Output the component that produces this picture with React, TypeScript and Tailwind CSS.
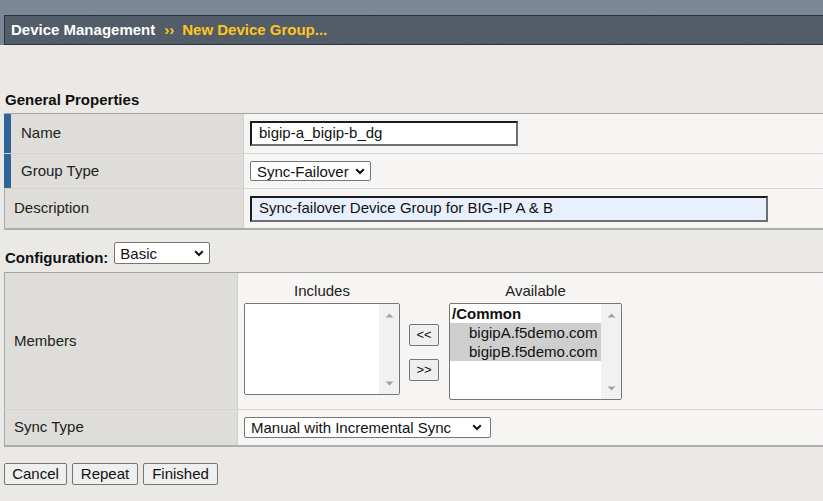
import React from "react";

const Chevron = () => (
  <svg width="10" height="7" viewBox="0 0 10 7" className="shrink-0">
    <path d="M1.2 1.2 L5 5 L8.8 1.2" fill="none" stroke="#111" strokeWidth="2" />
  </svg>
);

const UpArrow = () => (
  <svg width="9" height="5" viewBox="0 0 9 5">
    <path d="M0.5 4.5 L4.5 0.5 L8.5 4.5Z" fill="#a3a3a3" />
  </svg>
);
const DownArrow = () => (
  <svg width="9" height="5" viewBox="0 0 9 5">
    <path d="M0.5 0.5 L4.5 4.5 L8.5 0.5Z" fill="#a3a3a3" />
  </svg>
);

function Select({ text, cls }: { text: string; cls: string }) {
  return (
    <div
      className={
        "flex items-center justify-between bg-white border border-[#767676] rounded-[2px] text-[15px] leading-none text-[#111] " +
        cls
      }
    >
      <span>{text}</span>
      <Chevron />
    </div>
  );
}

function Scrollbar() {
  return (
    <div className="w-[20px] bg-[#f1f1f1] flex flex-col items-center justify-between pt-[9px] pb-[8px]">
      <UpArrow />
      <DownArrow />
    </div>
  );
}

function Btn({ children, cls }: { children: React.ReactNode; cls: string }) {
  return (
    <div
      className={
        "flex items-center justify-center bg-[#efefef] border border-[#767676] rounded-[2px] text-[#111] " + cls
      }
    >
      {children}
    </div>
  );
}

export default function App() {
  return (
    <div
      className="w-[823px] h-[501px] overflow-hidden bg-[#eae9e5] text-[#222] text-[15px]"
      style={{ fontFamily: '"Liberation Sans", Arial, sans-serif' }}
    >
      {/* top strip + header bar */}
      <div className="h-[45px] pt-[15px] pl-[4px] bg-[repeating-linear-gradient(135deg,#7b8898_0px,#7b8898_3px,#7a8696_3px,#7a8696_6px)]">
        <div className="h-[30px] border border-r-0 border-[#2d3238] bg-[repeating-linear-gradient(135deg,#535e6a_0px,#535e6a_3px,#515c68_3px,#515c68_6px)] flex items-center pl-[6px] font-bold text-[15px]">
          <span className="text-white">Device Management</span>
          <span className="text-[#ffc71a] ml-[9px] mr-[8px]">››</span>
          <span className="text-[#ffc71a]">New Device Group...</span>
        </div>
      </div>

      {/* General Properties */}
      <div className="mt-[46px] pl-[5px] h-[18px] leading-[18px] font-bold text-[15px] text-[#111]">
        General Properties
      </div>
      <div className="mt-[4px] ml-[4px] border-t border-b-2 border-t-[#a3a3a3] border-b-[#adadad]">
        {/* Name */}
        <div className="flex h-[40px] border-b border-[#d4d4d4]">
          <div className="w-[240px] bg-[#deddd9] border-l-[7px] border-[#2f6599] border-r border-r-[#d0d0d0] flex items-center pl-[10px]">
            Name
          </div>
          <div className="flex-1 bg-[#f6f5f3] flex items-center pl-[6px]">
            <div className="w-[268px] h-[25px] bg-white border-2 border-t-[#1c1c1c] border-l-[#1c1c1c] border-r-[#6e6e6e] border-b-[#6e6e6e] flex items-center pl-[7px] text-[#111]">
              bigip-a_bigip-b_dg
            </div>
          </div>
        </div>
        {/* Group Type */}
        <div className="flex h-[35px] border-b border-[#d4d4d4]">
          <div className="w-[240px] bg-[#deddd9] border-l-[7px] border-[#2f6599] border-r border-r-[#d0d0d0] flex items-center pl-[10px]">
            Group Type
          </div>
          <div className="flex-1 bg-[#f6f5f3] flex items-center pl-[6px]">
            <Select text="Sync-Failover" cls="w-[121px] h-[20px] pl-[6px] pr-[5px]" />
          </div>
        </div>
        {/* Description */}
        <div className="flex h-[39px]">
          <div className="w-[240px] bg-[#deddd9] border-l border-[#a8a8a8] border-r border-r-[#d0d0d0] flex items-center pl-[9px]">
            Description
          </div>
          <div className="flex-1 bg-[#f6f5f3] flex items-center pl-[6px]">
            <div className="w-[518px] h-[26px] bg-[#e8f0fe] border-2 border-t-[#1c1c1c] border-l-[#1c1c1c] border-r-[#6e6e6e] border-b-[#6e6e6e] flex items-center pl-[7px] text-[#111]">
              Sync-failover Device Group for BIG-IP A &amp; B
            </div>
          </div>
        </div>
      </div>

      {/* Configuration */}
      <div className="mt-[12px] flex items-end h-[22px]">
        <div className="pl-[5px] leading-[13px] font-bold text-[15px] text-[#111]">Configuration:</div>
        <Select text="Basic" cls="ml-[6px] w-[96px] h-[22px] pl-[5px] pr-[5px]" />
      </div>

      <div className="mt-[8px] ml-[4px] border-t border-b-2 border-t-[#a3a3a3] border-b-[#adadad]">
        {/* Members */}
        <div className="flex h-[137px] border-b border-[#d4d4d4]">
          <div className="w-[234px] bg-[#deddd9] border-l border-[#a8a8a8] border-r border-r-[#d0d0d0] flex items-center pl-[9px]">
            Members
          </div>
          <div className="flex-1 bg-[#f6f5f3] flex items-start pl-[6px] pt-[9px]">
            {/* Includes */}
            <div className="w-[156px] flex flex-col">
              <div className="h-[21px] leading-[17px] text-center">Includes</div>
              <div className="h-[92px] bg-white border border-[#767676] rounded-[2px] flex justify-end overflow-hidden">
                <Scrollbar />
              </div>
            </div>
            {/* Move buttons */}
            <div className="ml-[9px] mr-[10px] pt-[42px] flex flex-col gap-[13px]">
              <Btn cls="w-[30px] h-[22px] text-[13px]">&lt;&lt;</Btn>
              <Btn cls="w-[30px] h-[22px] text-[13px]">&gt;&gt;</Btn>
            </div>
            {/* Available */}
            <div className="w-[173px] flex flex-col">
              <div className="h-[21px] leading-[17px] text-center">Available</div>
              <div className="h-[97px] bg-white border border-[#767676] rounded-[2px] flex overflow-hidden">
                <div className="flex-1 flex flex-col text-[#111]">
                  <div className="h-[19px] leading-[19px] pl-[2px] font-bold">/Common</div>
                  <div className="h-[19px] leading-[19px] pl-[19px] bg-[#cecece]">bigipA.f5demo.com</div>
                  <div className="h-[19px] leading-[19px] pl-[19px] bg-[#cecece]">bigipB.f5demo.com</div>
                </div>
                <Scrollbar />
              </div>
            </div>
          </div>
        </div>
        {/* Sync Type */}
        <div className="flex h-[35px]">
          <div className="w-[234px] bg-[#deddd9] border-l border-[#a8a8a8] border-r border-r-[#d0d0d0] flex items-center pl-[9px]">
            Sync Type
          </div>
          <div className="flex-1 bg-[#f6f5f3] flex items-center pl-[6px]">
            <Select text="Manual with Incremental Sync" cls="w-[247px] h-[21px] pl-[6px] pr-[8px]" />
          </div>
        </div>
      </div>

      {/* Bottom buttons */}
      <div className="mt-[16px] ml-[4px] flex gap-[5px]">
        <Btn cls="w-[63px] h-[22px] text-[15px]">Cancel</Btn>
        <Btn cls="w-[66px] h-[22px] text-[15px]">Repeat</Btn>
        <Btn cls="w-[75px] h-[22px] text-[15px]">Finished</Btn>
      </div>
    </div>
  );
}
